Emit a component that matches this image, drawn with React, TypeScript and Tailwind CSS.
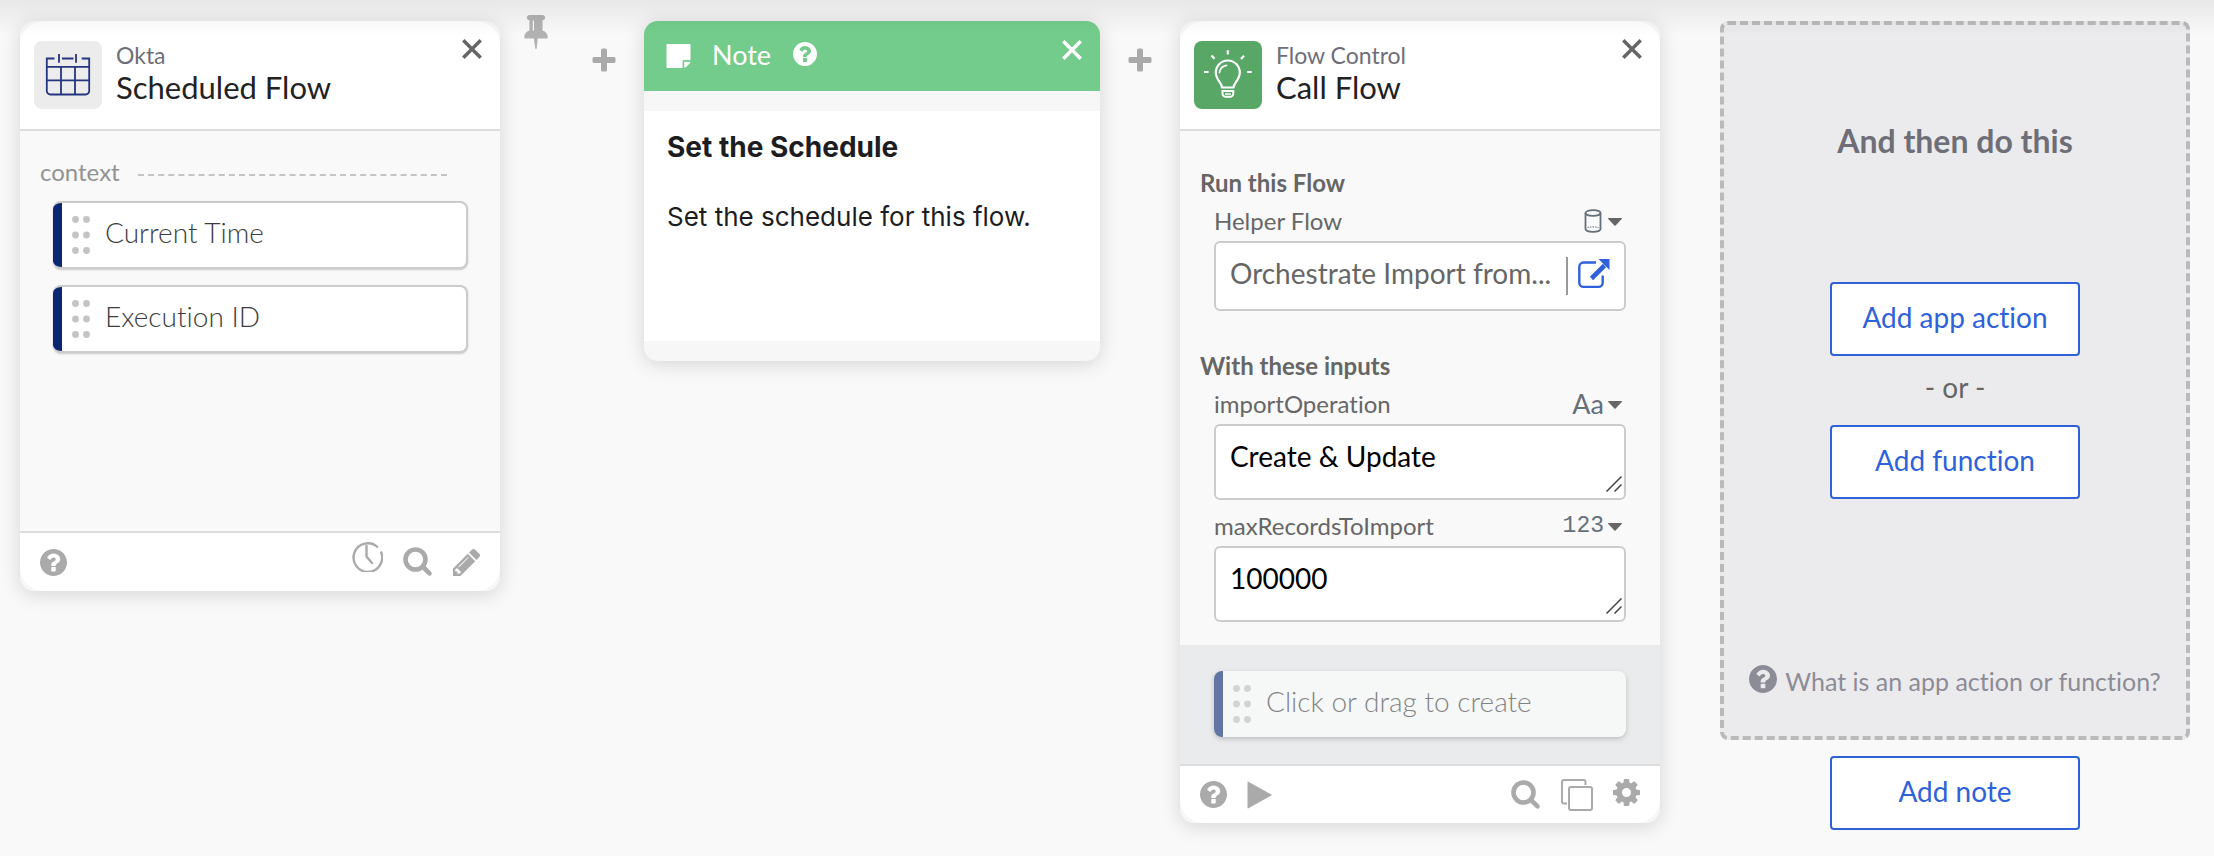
import React, { useState } from "react";

type IconProps = { className?: string };

function QuestionIcon({ className }: IconProps) {
  return (
    <svg className={className} viewBox="128 128 1536 1536" fill="currentColor" aria-hidden="true">
      <path d="M1024 1376v-192q0-14-9-23t-23-9h-192q-14 0-23 9t-9 23v192q0 14 9 23t23 9h192q14 0 23-9t9-23zm256-672q0-88-55.5-163t-138.5-116-170-41q-243 0-371 213-15 24 8 42l132 100q7 6 19 6 16 0 25-12 53-68 86-92 34-24 86-24 48 0 85.5 26t37.5 59q0 38-20 61t-68 45q-63 28-115.5 86.500t-52.5 125.500v36q0 14 9 23t23 9h192q14 0 23-9t9-23q0-19 21.5-49.500t54.500-49.500q32-18 49-28.500t46-35 44.500-48 28-60.500 12.500-81zm384 192q0 209-103 385.500t-279.500 279.500-385.500 103-385.500-103-279.500-279.500-103-385.500 103-385.500 279.500-279.500 385.500-103 385.500 103 279.500 279.500 103 385.500z" />
    </svg>
  );
}

function SearchIcon() {
  return (
    <svg className="size-[30px]" viewBox="0 0 30 30" fill="none" stroke="currentColor" aria-hidden="true">
      <circle cx="12.500" cy="12.500" r="10" strokeWidth="4.600" />
      <path d="M20.500 20.500l6 5.800" strokeWidth="4.600" strokeLinecap="round" />
    </svg>
  );
}

function ClockIcon() {
  return (
    <svg className="size-8" viewBox="0 0 32 32" fill="none" stroke="currentColor" strokeWidth="2.400" aria-hidden="true">
      <path d="M26.800 7.300A14.300 14.300 0 1 0 29.800 11.500" />
      <path d="M15.500 6v10.500l5.500 6.500" strokeLinecap="round" />
    </svg>
  );
}

function PencilIcon() {
  return (
    <svg className="size-[27px]" viewBox="128 149 1515 1515" fill="currentColor" aria-hidden="true">
      <path d="M491 1536l91-91-235-235-91 91v107h128v128h107zm523-928q0-22-22-22-10 0-17 7l-542 542q-7 7-7 17 0 22 22 22 10 0 17-7l542-542q7-7 7-17zm-54-192l416 416-832 832h-416v-416zm683 96q0 53-37 90l-166 166-416-416 166-165q36-38 90-38 53 0 91 38l235 234q37 39 37 91z" />
    </svg>
  );
}

function GearIcon() {
  return (
    <svg className="size-[27px]" viewBox="128 128 1536 1536" fill="currentColor" aria-hidden="true">
      <path d="M1152 896q0-106-75-181t-181-75-181 75-75 181 75 181 181 75 181-75 75-181zm512-109v222q0 12-8 23t-20 13l-185 28q-19 54-39 91 35 50 107 138 10 12 10 25t-9 23q-27 37-99 108t-94 71q-12 0-26-9l-138-108q-44 23-91 38-16 136-29 186-7 28-36 28h-222q-14 0-24.500-8.500t-11.500-21.500l-28-184q-49-16-90-37l-141 107q-10 9-25 9-14 0-25-11-126-114-165-168-7-10-7-23 0-12 8-23 15-21 51-66.500t54-70.500q-27-50-41-99l-183-27q-13-2-21-12.500t-8-23.500v-222q0-12 8-23t19-13l186-28q14-46 39-92-40-57-107-138-10-12-10-24 0-10 9-23 26-36 98.500-107.500t94.500-71.500q13 0 26 10l138 107q44-23 91-38 16-136 29-186 7-28 36-28h222q14 0 24.500 8.500t11.500 21.500l28 184q49 16 90 37l142-107q9-9 24-9 13 0 25 10 129 119 165 170 7 8 7 22 0 12-8 23-15 21-51 66.500t-54 70.500q26 50 41 98l183 28q13 2 21 12.500t8 23.500z" />
    </svg>
  );
}

function CopyIcon() {
  return (
    <svg className="size-8" viewBox="0 0 32 32" fill="none" stroke="currentColor" strokeWidth="2" aria-hidden="true">
      <path d="M6 24.500H3a2 2 0 0 1-2-2V3a2 2 0 0 1 2-2h19.500a2 2 0 0 1 2 2v3" />
      <rect x="8" y="8" width="23" height="23" rx="2" />
    </svg>
  );
}

function PlayIcon() {
  return (
    <svg className="h-7 w-[25px]" viewBox="0 0 25 28" fill="currentColor" aria-hidden="true">
      <path d="M0.500 1.200v25.600a.6.600 0 0 0 .9.500L24.300 14.500a.6.600 0 0 0 0-1L1.400.700a.6.600 0 0 0-.9.500z" />
    </svg>
  );
}

function PinIcon() {
  return (
    <svg className="h-[34px] w-6" viewBox="320 128 1152 1664" fill="currentColor" aria-hidden="true">
      <path d="M800 864v-448q0-14-9-23t-23-9-23 9-9 23v448q0 14 9 23t23 9 23-9 9-23zm672 352q0 26-19 45t-45 19h-429l-51 483q-2 12-10.500 20.500t-20.500 8.500h-1q-27 0-32-27l-76-485h-404q-26 0-45-19t-19-45q0-123 78.500-221.500t177.500-98.500v-512q-52 0-90-38t-38-90 38-90 90-38h640q52 0 90 38t38 90-38 90-90 38v512q99 0 177.500 98.500t78.500 221.500z" />
    </svg>
  );
}

function PlusIcon() {
  return (
    <svg className="size-6" viewBox="0 0 24 24" fill="currentColor" aria-hidden="true">
      <rect x="9" y="0.500" width="6" height="23" rx="1.500" />
      <rect x="0.500" y="9" width="23" height="6" rx="1.500" />
    </svg>
  );
}

function CloseIcon() {
  return (
    <svg className="size-5" viewBox="0 0 20 20" fill="none" stroke="currentColor" strokeWidth="3.500" aria-hidden="true">
      <path d="M1.300 1.300l17.400 17.400M18.700 1.300L1.300 18.700" />
    </svg>
  );
}

function StickyIcon() {
  return (
    <svg className="h-6 w-[25px]" viewBox="0 0 25 24" fill="currentColor" aria-hidden="true">
      <path d="M1.500 0h22a1 1 0 0 1 1 1v15h-6.500a1.500 1.500 0 0 0-1.500 1.500V24h-15a1 1 0 0 1-1-1V1a1 1 0 0 1 1-1z" />
      <path d="M18.200 17.700h6.200c-.2 1-.6 1.700-1.200 2.300l-2.600 2.600c-.6.600-1.400 1-2.400 1.200z" />
    </svg>
  );
}

function CalendarIcon() {
  return (
    <svg className="size-[68px]" viewBox="0 0 68 68" fill="none" stroke="#25357f" strokeWidth="1.800" aria-hidden="true">
      <path d="M20.500 17.500h-7.700V50a3.500 3.500 0 0 0 3.500 3.500h35.400a3.500 3.500 0 0 0 3.500-3.500V17.500h-7.500M28 17.500h11.500" />
      <path d="M25 13v8.800M42 13v8.800" />
      <path d="M12.800 25.800h42.400M12.800 39.300h42.400M27 25.800v27.700M41 25.800v27.700" />
    </svg>
  );
}

function BulbIcon() {
  return (
    <svg className="size-[68px]" viewBox="0 0 68 68" fill="none" stroke="#fff" strokeWidth="2.200" aria-hidden="true">
      <path d="M28 46.500c0-5-6.200-7.500-6.200-15a12 12 0 0 1 24 0c0 7.500-6.200 10-6.200 15z" strokeLinejoin="round" />
      <path d="M25.500 31.500a8.300 8.300 0 0 1 7-7.200" strokeLinecap="round" strokeWidth="1.800" />
      <path d="M28.500 50h10.800v2.500a3.300 3.300 0 0 1-3.300 3.300h-4.200a3.300 3.300 0 0 1-3.300-3.300z" strokeWidth="2" />
      <path d="M31 53h5.800" strokeWidth="1.600" />
      <path d="M33.800 9.300v4.200M17.500 14.500l3 3.200M50 14.800l-3 3.200M10 31h4.600M53.200 31h4.600" />
    </svg>
  );
}

function DatabaseIcon() {
  return (
    <svg className="h-6 w-[18px]" viewBox="0 0 18 24" fill="none" stroke="#66707a" strokeWidth="1.800" aria-hidden="true">
      <ellipse cx="9" cy="4" rx="7.500" ry="2.800" />
      <path d="M1.500 4v16c0 1.600 3.400 2.800 7.500 2.800s7.500-1.200 7.500-2.800V4" />
      <path d="M3.500 18.600c3-.9 8-.9 11 0" strokeWidth="1" strokeDasharray="1.500 1" />
    </svg>
  );
}

function CaretIcon() {
  return (
    <svg className="mt-0.5 h-2 w-3.5" viewBox="0 0 14 8" fill="#666" aria-hidden="true">
      <path d="M0.300 0h13.400q.5.500 0 1L7.600 7.500q-.6.600-1.200 0L.3 1q-.5-.5 0-1z" />
    </svg>
  );
}

function ExternalIcon() {
  return (
    <svg className="size-8" viewBox="0 0 32 32" fill="none" stroke="currentColor" strokeWidth="2.400" aria-hidden="true">
      <path d="M18 4.500H5.500a4.200 4.200 0 0 0-4.200 4.200v16a4.200 4.200 0 0 0 4.200 4.200h15a4.200 4.200 0 0 0 4.200-4.200V17.500" />
      <path d="M13.500 20.500L26.500 7.500" strokeWidth="4.600" />
      <path d="M20.500 1h11v11z" fill="currentColor" stroke="none" />
    </svg>
  );
}

function GripDots() {
  return (
    <svg className="h-[38px] w-[18px]" viewBox="0 0 18 38" fill="#c4c4c4" aria-hidden="true">
      {[3.5, 19, 34.5].map((y) => (
        <g key={y}>
          <circle cx="3.500" cy={y} r="3.400" />
          <circle cx="14.500" cy={y} r="3.400" />
        </g>
      ))}
    </svg>
  );
}

function Card({ children }: { children: React.ReactNode }) {
  return (
    <article className="overflow-hidden rounded-[14px] bg-[#f7f7f7] shadow-[0_3px_20px_rgba(0,0,0,0.15)]">
      {children}
    </article>
  );
}

function CardHeader({ icon, app, title }: { icon: React.ReactNode; app: string; title: string }) {
  return (
    <header className="flex h-[110px] items-start rounded-t-3xl border-b-2 border-[#dddddd] bg-white px-3.5">
      <div className="mt-5 shrink-0">{icon}</div>
      <div className="ml-3.5 mt-5 min-w-0 flex-1">
        <p className="truncate text-[23px] leading-7 text-[#6e6e78]">{app}</p>
        <h2 className="truncate text-[31px] leading-9 text-[#222222]">{title}</h2>
      </div>
      <button type="button" aria-label="Close" className="mr-1 mt-[18px] text-[#666666]">
        <CloseIcon />
      </button>
    </header>
  );
}

function OutputField({ label, faded = false }: { label: string; faded?: boolean }) {
  return (
    <button
      type="button"
      className={
        faded
          ? "flex h-[66px] w-full items-center overflow-hidden rounded-lg bg-white text-left opacity-60 shadow-[0_2px_5px_rgba(0,0,0,0.3)]"
          : "flex h-[68px] w-full items-center overflow-hidden rounded-lg border-2 border-l-0 border-[#cccccc] bg-white text-left shadow-[0_1px_2px_rgba(0,0,0,0.2)]"
      }
    >
      <span className="h-full w-[9px] shrink-0 bg-[#0b2772]" />
      <span className="ml-2.5">
        <GripDots />
      </span>
      <span className="ml-[15px] truncate pb-1.5 text-[28px] font-light leading-9 text-[#3d3d3d]">{label}</span>
    </button>
  );
}

function TypeButton({ label, children }: { label: string; children: React.ReactNode }) {
  return (
    <button type="button" aria-label={label} className="mr-1 flex items-center gap-1 text-[#66707a]">
      {children}
      <CaretIcon />
    </button>
  );
}

function InputField({ id, label, initial, type }: { id: string; label: string; initial: string; type: React.ReactNode }) {
  const [value, setValue] = useState(initial);
  return (
    <div>
      <div className="flex h-[30px] items-center justify-between">
        <label htmlFor={id} className="text-[24px] leading-[30px] text-[#666666]">
          {label}
        </label>
        <TypeButton label={`Type of ${label}`}>{type}</TypeButton>
      </div>
      <div className="relative mt-[5px] h-[76px]">
        <textarea
          id={id}
          value={value}
          onChange={(e) => setValue(e.target.value)}
          className="block h-full w-full resize-none overflow-hidden rounded-md border-2 border-[#cccccc] bg-white px-3.5 py-3 text-[28px] leading-9 text-black outline-none"
        />
        <svg className="pointer-events-none absolute bottom-2 right-1 size-4" viewBox="0 0 16 16" stroke="#444" strokeWidth="1.500" aria-hidden="true">
          <path d="M0.500 15.500l15-15M8.500 15.500l7-7" />
        </svg>
      </div>
    </div>
  );
}

function ActionButton({ children }: { children: React.ReactNode }) {
  return (
    <button
      type="button"
      className="h-[74px] w-[250px] rounded border-2 border-[#2f62d9] bg-white pb-1 text-[28px] leading-9 text-[#2f62d9]"
    >
      {children}
    </button>
  );
}

function AddStep() {
  return (
    <button type="button" aria-label="Add step" className="mt-[27px] h-6 text-[#aaaaaa]">
      <PlusIcon />
    </button>
  );
}

function IconButton({ label, children }: { label: string; children: React.ReactNode }) {
  return (
    <button type="button" aria-label={label}>
      {children}
    </button>
  );
}

export default function App() {
  return (
    <div className="relative min-h-screen bg-[#f9f9f9] font-['Lato','Open_Sans',sans-serif] [font-variant-ligatures:none]">
      <main className="grid grid-cols-[480fr_144px_456fr_80px_480fr_60px_470fr] items-start pb-6 pl-5 pr-6 pt-[21px]">
        <Card>
          <CardHeader
            icon={
              <div className="rounded-lg bg-[#ececec]">
                <CalendarIcon />
              </div>
            }
            app="Okta"
            title="Scheduled Flow"
          />
          <div className="min-h-[400px] bg-[#f9f9f9] pt-[27px]">
            <div className="flex items-center pl-5 pr-[53px]">
              <h3 className="text-[24px] leading-7 text-[#929292]">context</h3>
              <div className="ml-[18px] mt-1.5 flex-1 border-t-2 border-dashed border-[#c4c4c4]" />
            </div>
            <div className="mt-[15px] flex flex-col gap-4 pl-[33px] pr-8">
              <OutputField label="Current Time" />
              <OutputField label="Execution ID" />
            </div>
          </div>
          <footer className="flex h-[60px] items-center rounded-b-3xl border-t-2 border-[#dddddd] bg-white px-5 text-[#aaaaaa]">
            <IconButton label="Help">
              <QuestionIcon className="size-[27px]" />
            </IconButton>
            <div className="ml-auto flex items-center gap-5">
              <span className="flex pb-3">
                <IconButton label="Run history">
                  <ClockIcon />
                </IconButton>
              </span>
              <IconButton label="Search">
                <SearchIcon />
              </IconButton>
              <IconButton label="Edit">
                <PencilIcon />
              </IconButton>
            </div>
          </footer>
        </Card>

        <div className="flex items-start pl-6">
          <button type="button" aria-label="Pin" className="-mt-1.5 mr-11 h-[34px] text-[#b2b2b2]">
            <PinIcon />
          </button>
          <AddStep />
        </div>

        <Card>
          <header className="flex h-[70px] items-start bg-[#73cc8c] pl-[22px] pr-[18px] text-white">
            <span className="mt-[23px]">
              <StickyIcon />
            </span>
            <h2 className="ml-[21px] mt-4 text-[27px] leading-9">Note</h2>
            <button type="button" aria-label="About notes" className="ml-[22px] mt-[21px]">
              <QuestionIcon className="size-6" />
            </button>
            <button type="button" aria-label="Close" className="ml-auto mt-[19px]">
              <CloseIcon />
            </button>
          </header>
          <div className="my-5 min-h-[230px] bg-white px-[23px] pt-[18px] font-['Inter',sans-serif] text-[#1d1d21]">
            <h3 className="text-[28px] font-bold leading-9">Set the Schedule</h3>
            <p className="mt-[34px] text-[26px] leading-9">Set the schedule for this flow.</p>
          </div>
        </Card>

        <div className="flex justify-center">
          <AddStep />
        </div>

        <Card>
          <CardHeader
            icon={
              <div className="rounded-lg bg-[#58a767]">
                <BulbIcon />
              </div>
            }
            app="Flow Control"
            title="Call Flow"
          />
          <div className="bg-[#f9f9f9] pb-[23px] pl-5 pr-[34px] pt-[37px]">
            <h3 className="text-[24px] font-bold leading-[30px] text-[#666666]">Run this Flow</h3>
            <div className="mt-2 pl-3.5">
              <div className="flex h-[30px] items-center justify-between">
                <span id="helper-flow-label" className="text-[24px] leading-[30px] text-[#666666]">
                  Helper Flow
                </span>
                <TypeButton label="Type of Helper Flow">
                  <span className="mr-0.5">
                    <DatabaseIcon />
                  </span>
                </TypeButton>
              </div>
              <div className="mt-[5px] flex h-[70px] items-center rounded-md border-2 border-[#cccccc] bg-white pl-3.5 pr-3.5">
                <button
                  type="button"
                  aria-describedby="helper-flow-label"
                  className="min-w-0 flex-1 truncate pb-1.5 text-left text-[28px] leading-9 text-[#666666]"
                >
                  Orchestrate Import from...
                </button>
                <span className="mx-2.5 h-[38px] w-0.5 bg-[#999999]" />
                <a href="#flow" aria-label="Open flow" className="pb-1 text-[#2f62d9]">
                  <ExternalIcon />
                </a>
              </div>
            </div>
            <h3 className="mt-10 text-[24px] font-bold leading-[30px] text-[#666666]">With these inputs</h3>
            <div className="mt-2 flex flex-col gap-[11px] pl-3.5">
              <InputField
                id="import-operation"
                label="importOperation"
                initial="Create &amp; Update"
                type={<span className="text-[27px] leading-[30px]">Aa</span>}
              />
              <InputField
                id="max-records"
                label="maxRecordsToImport"
                initial="100000"
                type={<span className="font-['Liberation_Mono',monospace] text-[23px] leading-[30px]">123</span>}
              />
            </div>
          </div>
          <div className="bg-[#eaebed] pb-[27px] pl-[34px] pr-[34px] pt-[26px]">
            <OutputField label="Click or drag to create" faded />
          </div>
          <footer className="flex h-[59px] items-center rounded-b-3xl border-t-2 border-[#dddddd] bg-white px-5 text-[#aaaaaa]">
            <IconButton label="Help">
              <QuestionIcon className="size-[27px]" />
            </IconButton>
            <span className="ml-5 flex">
              <IconButton label="Run">
                <PlayIcon />
              </IconButton>
            </span>
            <div className="ml-auto flex items-center gap-5">
              <IconButton label="Search">
                <SearchIcon />
              </IconButton>
              <IconButton label="Copy">
                <CopyIcon />
              </IconButton>
              <span className="flex pb-1">
                <IconButton label="Settings">
                  <GearIcon />
                </IconButton>
              </span>
            </div>
          </footer>
        </Card>

        <div />

        <div className="flex flex-col items-center gap-4">
          <section className="flex w-full flex-col items-center rounded-lg border-4 border-dashed border-[#bababa] bg-[#ebebed] pb-[39px] pt-24">
            <h2 className="text-[32px] font-bold leading-10 text-[#6e6e78]">And then do this</h2>
            <div className="mt-[121px] flex flex-col items-center">
              <ActionButton>Add app action</ActionButton>
              <p className="mb-5 mt-[13px] text-[28px] leading-9 text-[#666666]">- or -</p>
              <ActionButton>Add function</ActionButton>
            </div>
            <a href="#help" className="mt-[166px] flex items-start gap-2 whitespace-nowrap text-[25px] leading-8 text-[#8c8c96]">
              <QuestionIcon className="size-7" />
              What is an app action or function?
            </a>
          </section>
          <ActionButton>Add note</ActionButton>
        </div>
      </main>
      <div className="pointer-events-none absolute inset-x-0 top-0 h-9 bg-linear-to-b from-black/7 to-transparent" />
    </div>
  );
}
